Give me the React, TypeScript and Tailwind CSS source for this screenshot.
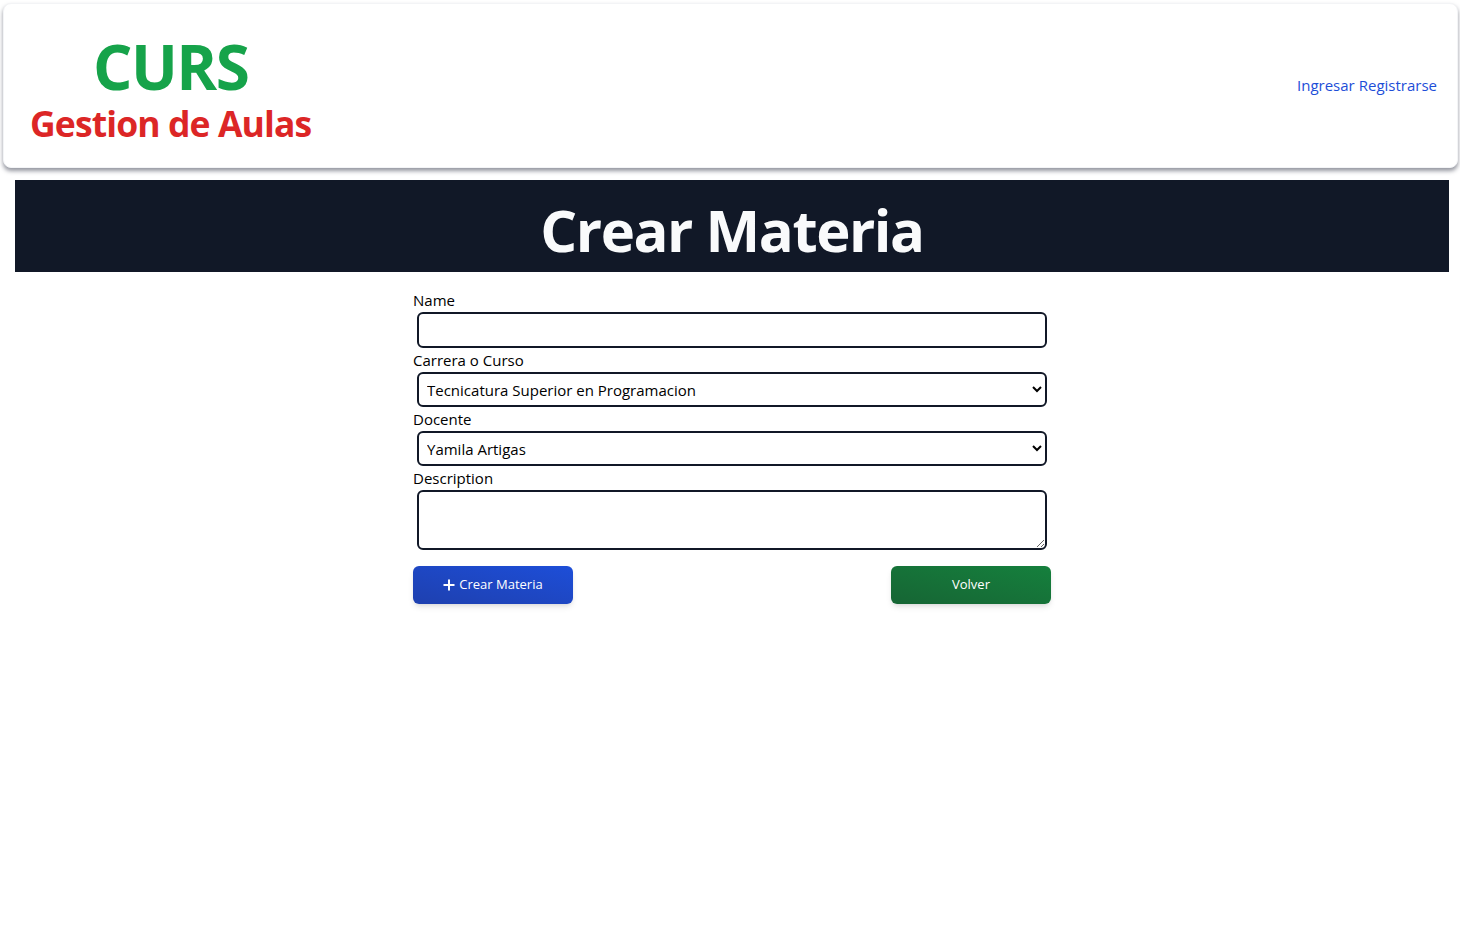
import { useState } from 'react'

const font = { fontFamily: '"Open Sans", "Noto Sans", sans-serif' }

function Header() {
  return (
    <header className="mt-[3px] ml-[3px] mr-[2px] h-[165px] bg-white rounded-lg shadow-[0_3px_4px_rgba(60,64,80,0.55)] border border-gray-100 flex items-center justify-between pl-[26px] pr-[20px]">
      <div className="flex flex-col items-center pt-2">
        <h1 className="text-[62px] font-bold text-[#16a34a] tracking-tight leading-[62px]">CURS</h1>
        <h2 className="text-[35.5px] font-bold text-[#dc2626] leading-[42px] mt-[5px] tracking-tight">Gestion de Aulas</h2>
      </div>
      <nav className="flex gap-1 text-[#1d4ed8] text-[15px]">
        <a href="#">Ingresar</a>
        <a href="#">Registrarse</a>
      </nav>
    </header>
  )
}

export default function App() {
  const [name, setName] = useState('')
  const [carrera, setCarrera] = useState('tsp')
  const [docente, setDocente] = useState('ya')
  const [desc, setDesc] = useState('')

  return (
    <div className="min-h-screen bg-white text-black" style={font}>
      <Header />
      <div className="pl-[15px] pr-[11px] mt-3">
        <div className="bg-[#111827] h-[92px] flex items-center justify-center">
          <h1 className="text-[58px] font-bold text-[#f9fafb] tracking-tight mt-[6px]">Crear Materia</h1>
        </div>

        <form className="w-[638px] mx-auto mt-4 flex flex-col" onSubmit={(e) => e.preventDefault()}>
          <label className="text-[15px] leading-6">Name</label>
          <input
            value={name}
            onChange={(e) => setName(e.target.value)}
            className="mx-1 h-9 border-2 border-[#111827] rounded-md px-2"
          />
          <label className="text-[15px] leading-6">Carrera o Curso</label>
          <select
            value={carrera}
            onChange={(e) => setCarrera(e.target.value)}
            className="mx-1 h-[35px] border-2 border-[#111827] rounded-md px-1 text-[15px]"
          >
            <option value="tsp">Tecnicatura Superior en Programacion</option>
          </select>
          <label className="text-[15px] leading-6">Docente</label>
          <select
            value={docente}
            onChange={(e) => setDocente(e.target.value)}
            className="mx-1 h-[35px] border-2 border-[#111827] rounded-md px-1 text-[15px]"
          >
            <option value="ya">Yamila Artigas</option>
          </select>
          <label className="text-[15px] leading-6">Description</label>
          <textarea
            value={desc}
            onChange={(e) => setDesc(e.target.value)}
            className="mx-1 h-[60px] border-2 border-[#111827] rounded-md px-2"
          />

          <div className="flex justify-between mt-4">
            <button className="w-40 h-[38px] rounded-md bg-gradient-to-tr from-[#1e40af] to-[#1d4ed8] text-white text-[13px] shadow-md flex items-center justify-center gap-1">
              <svg width="12" height="12" viewBox="0 0 12 12" className="stroke-white" strokeWidth="2">
                <path d="M6 0.5v11M0.5 6h11" />
              </svg>
              Crear Materia
            </button>
            <button className="w-40 h-[38px] rounded-md bg-gradient-to-tr from-[#166534] to-[#15803d] text-white text-[13px] shadow-md">
              Volver
            </button>
          </div>
        </form>
      </div>
    </div>
  )
}
